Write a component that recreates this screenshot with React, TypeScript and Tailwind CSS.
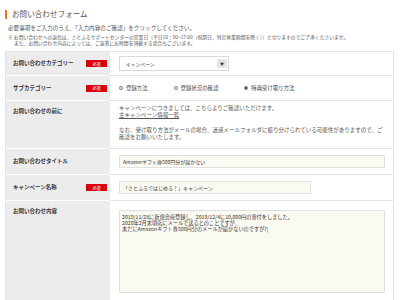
import { FunctionComponent, ReactNode } from "react";

const Badge = () => (
  <span className="flex items-center justify-center w-[21px] h-[7px] bg-[#d7000f] text-white text-[4px] leading-none">
    必須
  </span>
);

interface RowProps {
  label: string;
  required?: boolean;
  height: string;
  alignTop?: boolean;
  children: ReactNode;
}

const Row: FunctionComponent<RowProps> = ({ label, required, height, alignTop, children }) => (
  <div className={`flex border-b border-[#e2e2e2] ${height}`}>
    <div
      className={`w-[104px] shrink-0 bg-[#ececec] flex pl-[7px] pr-[3px] border-b border-white -mb-px ${
        alignTop ? "items-start pt-[6px]" : "items-center"
      }`}
    >
      <span className="flex-1 font-bold text-[5.5px] text-[#333]">{label}</span>
      {required && <Badge />}
    </div>
    <div className={`flex-1 pl-[9px] pr-[8px] flex ${alignTop ? "items-start" : "items-center"}`}>{children}</div>
  </div>
);

const Radio = ({ label, checked }: { label: string; checked?: boolean }) => (
  <span className="flex items-center gap-[3px]">
    <span className="w-[4px] h-[4px] rounded-full border-[0.7px] border-[#777] flex items-center justify-center">
      {checked && <span className="w-[2px] h-[2px] rounded-full bg-[#333]" />}
    </span>
    <span>{label}</span>
  </span>
);

export default function App() {
  return (
    <div
      className="w-[400px] h-[300px] overflow-hidden bg-white text-[#444]"
      style={{ fontFamily: '"Noto Sans CJK JP", "Noto Sans", sans-serif' }}
    >
      <div className="flex items-center pt-[8px] pl-[5px] h-[20px]">
        <span className="w-[2px] h-[9px] bg-[#e8771a] mr-[5px]" />
        <span className="text-[7.6px] text-[#555] leading-none">お問い合わせフォーム</span>
      </div>
      <div className="pl-[8px] pt-[5px] text-[5.6px] text-[#555] leading-[7px]">
        <p>必要事項をご入力のうえ、「入力内容のご確認」をクリックしてください。</p>
        <p className="text-[4.8px] leading-[7px] mt-[1px]">
          ※ お問い合わせへの返信は、さとふるサポートセンターの営業日（平日10：00~17:00（祝祭日、特定休業期間を除く））となりますのでご了承くださいませ。
        </p>
        <p className="text-[4.8px] leading-[6px] pl-[6px]">
          また、お問い合わせ内容によっては、ご返答にお時間を頂戴する場合もございます。
        </p>
      </div>

      <div className="mx-[5px] mr-[6px] mt-[5px] border border-[#e2e2e2] text-[5.4px] text-[#444]">
        <Row label="お問い合わせカテゴリー" required height="h-[24px]">
          <div className="flex items-center w-[110px] h-[15px] border border-[#d8d8d8] bg-white">
            <span className="flex-1 pl-[6px] text-[4.8px]">キャンペーン</span>
            <span className="w-[10px] h-[9px] mr-[1px] bg-[#e4e4e4] flex items-center justify-center text-[4px] text-[#333]">
              ▼
            </span>
          </div>
        </Row>
        <Row label="サブカテゴリー" required height="h-[25px]">
          <div className="flex items-center gap-[26px] text-[5.4px]">
            <Radio label="登録方法" />
            <Radio label="登録状況の確認" />
            <Radio label="特典受け取り方法" checked />
          </div>
        </Row>
        <Row label="お問い合わせの前に" height="h-[48px]" alignTop>
          <div className="pt-[4px] text-[5.5px] leading-[7px] text-[#555]">
            <p>キャンペーンにつきましては、こちらよりご確認いただけます。</p>
            <p className="underline">主キャンペーン情報一覧</p>
            <p className="mt-[8px] whitespace-nowrap">
              なお、受け取り方法がメールの場合、迷惑メールフォルダに振り分けられている可能性がありますので、ご
            </p>
            <p>確認をお願いいたします。</p>
          </div>
        </Row>
        <Row label="お問い合わせタイトル" height="h-[26px]">
          <div className="flex items-center w-full h-[13px] border border-[#e0e0e0] bg-[#fbfaf2] pl-[3px] text-[5px] text-[#333]">
            Amazonギフト券500円分が届かない
          </div>
        </Row>
        <Row label="キャンペーン名称" required height="h-[26px]">
          <div className="flex items-center w-[192px] h-[13px] border border-[#e0e0e0] bg-[#fbfaf2] pl-[3px] text-[5px] text-[#333]">
            「さとふるではじめる！」キャンペーン
          </div>
        </Row>
        <Row label="お問い合わせ内容" height="h-[100px]" alignTop>
          <div className="mt-[9px] w-full h-[83px] border border-[#e0e0e0] bg-[#fbfaf2] px-[2px] pt-[3px] text-[5.2px] leading-[5.8px] text-[#333]">
            <p>2019/11/28に新規会員登録し、2019/12/4に10,000円の寄付をしました。</p>
            <p>2020年2月末頃迄にメールで送るとのことですが、</p>
            <p>未だにAmazonギフト券500円分のメールが届かないのですが?|</p>
          </div>
        </Row>
      </div>
    </div>
  );
}
